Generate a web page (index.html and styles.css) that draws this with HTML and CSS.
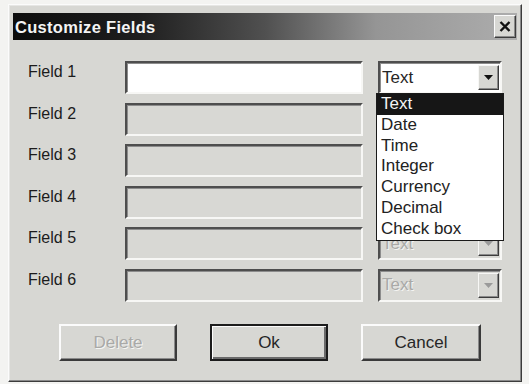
FILE: index.html
```html
<!DOCTYPE html>
<html>
<head>
<meta charset="utf-8">
<link rel="stylesheet" href="styles.css">
</head>
<body>
<div class="dialog">
  <div class="titlebar">
    <span class="title">Customize Fields</span>
    <div class="close">
      <svg width="12" height="11" viewBox="0 0 12 11"><path d="M1.5 1 L10.5 10 M10.5 1 L1.5 10" stroke="#111" stroke-width="2.4" fill="none"/></svg>
    </div>
  </div>
  <div class="fields">
    <div class="label">Field 1</div>
    <div class="input on"></div>
    <div class="select on"><span class="sel-text">Text</span><span class="drop"><svg width="9" height="5" viewBox="0 0 9 5"><path d="M0 0 H9 L4.5 5 Z" fill="#111"/></svg></span></div>

    <div class="label">Field 2</div>
    <div class="input"></div>
    <div class="select off"><span class="sel-text"></span><span class="drop"><svg width="9" height="5" viewBox="0 0 9 5"><path d="M0 0 H9 L4.5 5 Z" fill="#9a9a9a"/></svg></span></div>

    <div class="label">Field 3</div>
    <div class="input"></div>
    <div class="select off"><span class="sel-text"></span><span class="drop"><svg width="9" height="5" viewBox="0 0 9 5"><path d="M0 0 H9 L4.5 5 Z" fill="#9a9a9a"/></svg></span></div>

    <div class="label">Field 4</div>
    <div class="input"></div>
    <div class="select off"><span class="sel-text"></span><span class="drop"><svg width="9" height="5" viewBox="0 0 9 5"><path d="M0 0 H9 L4.5 5 Z" fill="#9a9a9a"/></svg></span></div>

    <div class="label">Field 5</div>
    <div class="input"></div>
    <div class="select off"><span class="sel-text">Text</span><span class="drop"><svg width="9" height="5" viewBox="0 0 9 5"><path d="M0 0 H9 L4.5 5 Z" fill="#9a9a9a"/></svg></span></div>

    <div class="label">Field 6</div>
    <div class="input"></div>
    <div class="select off"><span class="sel-text">Text</span><span class="drop"><svg width="9" height="5" viewBox="0 0 9 5"><path d="M0 0 H9 L4.5 5 Z" fill="#9a9a9a"/></svg></span></div>

    <ul class="list">
      <li class="sel">Text</li>
      <li>Date</li>
      <li>Time</li>
      <li>Integer</li>
      <li>Currency</li>
      <li>Decimal</li>
      <li>Check box</li>
    </ul>
  </div>
  <div class="buttons">
    <div class="btn disabled">Delete</div>
    <div class="btn default">Ok</div>
    <div class="btn wide">Cancel</div>
  </div>
</div>
</body>
</html>
```
FILE: styles.css
```css
html, body {
  margin: 0;
  padding: 0;
  background: #f3f3f1;
}
body {
  width: 529px;
  height: 384px;
  overflow: hidden;
  font-family: "Liberation Sans", Arial, sans-serif;
}
.dialog {
  box-sizing: border-box;
  margin: 4px 0 0 8px;
  width: 514px;
  height: 378px;
  background: #d7d7d3;
  border: 1px solid;
  border-color: #fbfbfb #3c3c3c #3c3c3c #fbfbfb;
  box-shadow: inset -1px -1px 0 #8a8a8a, inset 1px 1px 0 #e6e6e4;
  padding: 8px 4px 0 4px;
}
.titlebar {
  height: 27px;
  display: flex;
  align-items: center;
  justify-content: space-between;
  padding-left: 2px;
  padding-right: 1px;
  background: linear-gradient(to right, #0c0c0c 0%, #1e1e1e 25%, #505050 50%, #959595 72%, #adadad 100%);
}
.title {
  color: #f4f4f4;
  font-weight: bold;
  font-size: 16.5px;
  letter-spacing: 0.3px;
  margin-top: 1px;
}
.close {
  box-sizing: border-box;
  width: 22px;
  height: 23px;
  background: #d7d7d3;
  border: 1px solid;
  border-color: #fbfbfb #3c3c3c #3c3c3c #fbfbfb;
  box-shadow: inset -1px -1px 0 #8a8a8a;
  display: flex;
  align-items: center;
  justify-content: center;
}
.fields {
  position: relative;
  margin: 21px 0 0 15px;
  display: grid;
  grid-template-columns: 82px 238px 124px;
  grid-auto-rows: 33px;
  column-gap: 15px;
  row-gap: 8.5px;
}
.label {
  font-size: 16px;
  color: #1c1c1c;
  padding-top: 2px;
}
.input {
  box-sizing: border-box;
  border: 2px solid;
  border-color: #4e4e4e #f7f7f5 #f7f7f5 #4e4e4e;
  box-shadow: inset 1px 1px 0 #8c8c8c;
  background: #d8d8d4;
}
.input.on {
  background: #ffffff;
}
.select {
  box-sizing: border-box;
  border: 2px solid;
  border-color: #4e4e4e #f7f7f5 #f7f7f5 #4e4e4e;
  box-shadow: inset 1px 1px 0 #8c8c8c;
  background: #d8d8d4;
  display: flex;
  align-items: center;
  justify-content: space-between;
  padding: 0 1px 0 2px;
}
.select.on {
  background: #ffffff;
}
.sel-text {
  font-size: 17px;
  color: #262626;
}
.select.off .sel-text {
  color: #a9a9a7;
  text-shadow: 1px 1px 0 #f4f4f2;
}
.drop {
  box-sizing: border-box;
  width: 21px;
  height: 25px;
  background: #d7d7d3;
  border: 1px solid;
  border-color: #f7f7f5 #3c3c3c #3c3c3c #f7f7f5;
  box-shadow: inset -1px -1px 0 #8a8a8a;
  display: flex;
  align-items: center;
  justify-content: center;
}
.list {
  position: absolute;
  left: 348px;
  top: 32px;
  width: 128px;
  box-sizing: border-box;
  margin: 0;
  padding: 0;
  list-style: none;
  background: #ffffff;
  border: 1px solid #1a1a1a;
}
.list li {
  height: 20.8px;
  line-height: 20.8px;
  font-size: 17px;
  color: #222;
  padding-left: 4px;
}
.list li.sel {
  background: #161616;
  color: #f4f4f4;
}
.buttons {
  display: flex;
  gap: 33px;
  margin: 22.5px 0 0 46px;
}
.btn {
  box-sizing: border-box;
  width: 118px;
  height: 37px;
  border: 2px solid;
  border-color: #fbfbfb #3a3a3a #3a3a3a #fbfbfb;
  box-shadow: inset -1px -1px 0 #8a8a8a;
  display: flex;
  align-items: center;
  justify-content: center;
  font-size: 17px;
  color: #262626;
}
.btn.wide {
  width: 120px;
}
.btn.disabled {
  color: #a9a9a7;
  text-shadow: 1px 1px 0 #f6f6f4;
}
.btn.default {
  border: 2px solid #1c1c1c;
  box-shadow: inset 1px 1px 0 #fbfbfb, inset -2px -2px 0 #6a6a6a;
}
```
